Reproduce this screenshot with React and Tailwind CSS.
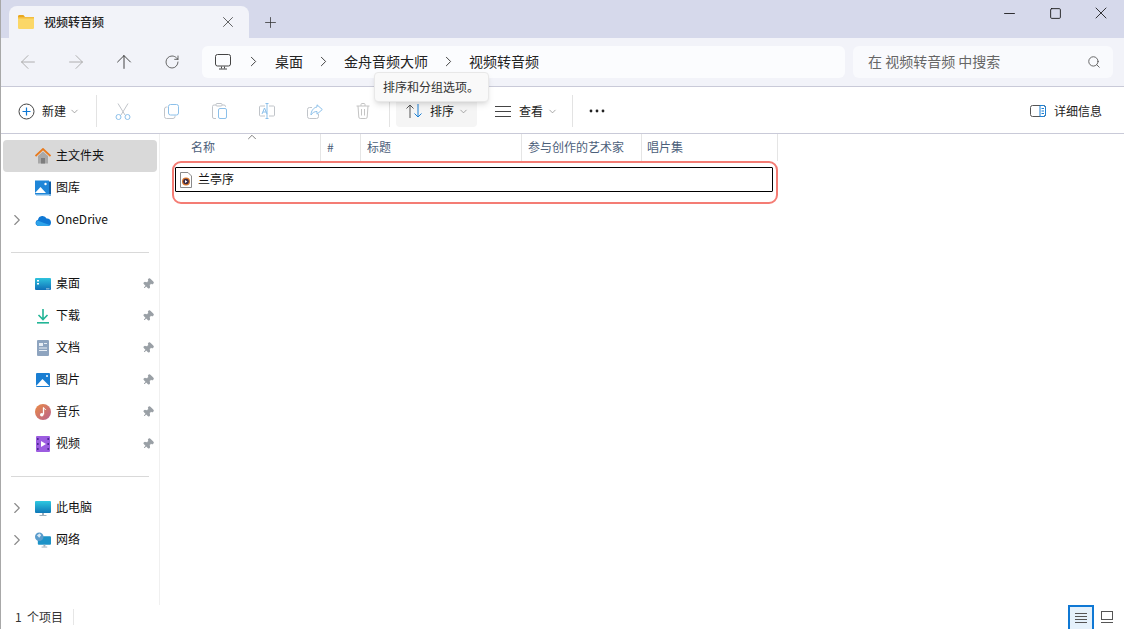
import { ArrowLeft, ArrowRight, ArrowUp, RotateCw, ChevronRight, ChevronDown, ChevronUp, X, Plus, Minus, Square, Search, Pin } from "lucide-react";

const font = { fontFamily: '"Noto Sans CJK SC", "Noto Sans", sans-serif' };

function FolderIcon() {
  return (
    <svg width="16" height="14" viewBox="0 0 16 14">
      <path d="M0 1.500C0 .7.6 0 1.400 0h4l1.600 2H0z" fill="#e9a820" />
      <rect x="0" y="2" width="16" height="12" rx="1.200" fill="#fbd768" />
      <rect x="0" y="2" width="16" height="1.500" fill="#f3bd3f" />
    </svg>
  );
}

function HomeIcon() {
  return (
    <svg width="16" height="16" viewBox="0 0 16 16">
      <path d="M3 8l5-4.500L13 8v7.500H3z" fill="#a8a8a8" />
      <rect x="6" y="10" width="4" height="5.500" fill="#7d7d7d" />
      <path d="M.5 8L8 1l7.500 7" fill="none" stroke="#e87a1d" strokeWidth="1.800" />
    </svg>
  );
}

function GalleryIcon() {
  return (
    <svg width="16" height="16" viewBox="0 0 16 16">
      <rect x="0" y="0.500" width="14" height="14" fill="#1f86d8" />
      <rect x="14" y="1.500" width="2" height="14" fill="#0f5fa8" />
      <rect x="1" y="14" width="15" height="1.500" fill="#6cb2e8" />
      <path d="M0 13l5.500-6L11 13z" fill="#fff" />
      <circle cx="10.500" cy="4" r="1.200" fill="#fff" />
    </svg>
  );
}

function CloudIcon() {
  return (
    <svg width="16" height="11" viewBox="0 0 16 11">
      <path d="M3.500 11A3.200 3.200 0 013 4.700 4.600 4.600 0 0111.600 3.600 3.800 3.800 0 0116 7.500 3.500 3.500 0 0112.500 11z" fill="#0f78d4" />
      <path d="M3.500 11A3 3 0 012.500 5.500L9 8l5.800 2A3.400 3.400 0 0112.500 11z" fill="#2fa4ea" />
    </svg>
  );
}

function DesktopIcon() {
  return (
    <svg width="16" height="12" viewBox="0 0 16 12">
      <defs>
        <linearGradient id="dk" x1="0" y1="0" x2="0" y2="1">
          <stop offset="0" stopColor="#2ec3dd" />
          <stop offset="1" stopColor="#0f6fb8" />
        </linearGradient>
      </defs>
      <rect width="16" height="12" rx="1" fill="url(#dk)" />
      <rect x="2" y="2" width="2" height="1.500" fill="#fff" />
      <rect x="2" y="5" width="2" height="1.500" fill="#fff" />
      <rect x="11" y="10.500" width="3.500" height="0.800" fill="#cde" />
    </svg>
  );
}

function DownloadIcon() {
  return (
    <svg width="12" height="15" viewBox="0 0 12 15">
      <path d="M6 0v10M1.500 6L6 10.500 10.500 6" fill="none" stroke="#22b596" strokeWidth="1.600" />
      <rect y="13" width="12" height="1.600" fill="#22b596" />
    </svg>
  );
}

function DocIcon() {
  return (
    <svg width="12" height="16" viewBox="0 0 12 16">
      <rect width="12" height="16" rx="1" fill="#8ea4bf" />
      <rect x="2" y="3" width="4" height="3" fill="#e8eef5" />
      <rect x="7" y="3" width="3" height="1" fill="#e8eef5" />
      <rect x="2" y="7.500" width="8" height="1" fill="#e8eef5" />
      <rect x="2" y="10" width="8" height="1" fill="#e8eef5" />
    </svg>
  );
}

function PictureIcon() {
  return (
    <svg width="14" height="14" viewBox="0 0 14 14">
      <rect width="14" height="14" rx="1" fill="#1a7ed2" />
      <path d="M0 13L6.500 6 13.500 13z" fill="#fff" />
      <circle cx="11" cy="3" r="1" fill="#fff" />
    </svg>
  );
}

function MusicIcon() {
  return (
    <svg width="16" height="16" viewBox="0 0 16 16">
      <defs>
        <linearGradient id="mu" x1="0" y1="0" x2="1" y2="1">
          <stop offset="0" stopColor="#ea8a44" />
          <stop offset="1" stopColor="#b9628f" />
        </linearGradient>
      </defs>
      <circle cx="8" cy="8" r="8" fill="url(#mu)" />
      <path d="M8.500 3.500v7" stroke="#fff" strokeWidth="1.300" />
      <path d="M8.500 3.500c.5 1.500 2 1.500 2.500 2.500" stroke="#fff" strokeWidth="1" fill="none" />
      <circle cx="6.800" cy="10.800" r="1.800" fill="#fff" />
    </svg>
  );
}

function VideoIcon() {
  return (
    <svg width="14" height="16" viewBox="0 0 14 16">
      <rect width="14" height="16" rx="1" fill="#9c5ce0" />
      <path d="M5 5l5 3-5 3z" fill="#fff" />
      <rect x="1" y="2" width="1.600" height="2" fill="#4c2a94" />
      <rect x="1" y="7" width="1.600" height="2" fill="#4c2a94" />
      <rect x="1" y="12" width="1.600" height="2" fill="#4c2a94" />
      <rect x="11.400" y="2" width="1.600" height="2" fill="#4c2a94" />
      <rect x="11.400" y="7" width="1.600" height="2" fill="#4c2a94" />
      <rect x="11.400" y="12" width="1.600" height="2" fill="#4c2a94" />
    </svg>
  );
}

function PcIcon() {
  return (
    <svg width="16" height="15" viewBox="0 0 16 15">
      <defs>
        <linearGradient id="pc" x1="0" y1="0" x2="0" y2="1">
          <stop offset="0" stopColor="#2ec8e0" />
          <stop offset="1" stopColor="#0f78b8" />
        </linearGradient>
      </defs>
      <rect width="16" height="12" rx="1" fill="url(#pc)" />
      <rect x="7" y="12" width="2" height="2" fill="#9fb0bd" />
      <rect x="4.500" y="14" width="7" height="1" fill="#9fb0bd" />
    </svg>
  );
}

function NetworkIcon() {
  return (
    <svg width="17" height="16" viewBox="0 0 17 16">
      <rect x="3" y="4" width="14" height="9" rx="1" fill="#1d93c8" />
      <rect x="9" y="13" width="2" height="2" fill="#9fb0bd" />
      <rect x="7" y="15" width="6" height="1" fill="#9fb0bd" />
      <circle cx="4.500" cy="4.500" r="4.500" fill="#5a9ccc" />
      <path d="M2 3l3-2 1.500 2-2 2.500z" fill="#d8e8f4" />
    </svg>
  );
}

function CutIcon() {
  return (
    <svg width="16" height="17" viewBox="0 0 16 17" fill="none">
      <path d="M3 .5l7 11.500M13 .5L6 12" stroke="#c0c4c9" />
      <circle cx="3.500" cy="14" r="2.500" stroke="#8cc0ea" />
      <circle cx="12.500" cy="14" r="2.500" stroke="#8cc0ea" />
    </svg>
  );
}

function CopyIcon() {
  return (
    <svg width="15" height="15" viewBox="0 0 15 15" fill="none">
      <path d="M3.500 3H2.500a2 2 0 00-2 2v7.500a2 2 0 002 2H9a2 2 0 002-2v-1" stroke="#c0c4c9" />
      <rect x="4.500" y=".5" width="10" height="10.500" rx="2" stroke="#8cc0ea" />
    </svg>
  );
}

function PasteIcon() {
  return (
    <svg width="15" height="16" viewBox="0 0 15 16" fill="none">
      <path d="M4 2H2a1.500 1.500 0 00-1.500 1.500V14A1.500 1.500 0 002 15.500h2M10 2h2a1.500 1.500 0 011.500 1.500V4" stroke="#c0c4c9" />
      <rect x="4" y=".5" width="6" height="2.500" rx="1" stroke="#c0c4c9" />
      <rect x="6.500" y="5.500" width="8" height="10" rx="1.500" stroke="#8cc0ea" />
    </svg>
  );
}

function RenameIcon() {
  return (
    <svg width="16" height="16" viewBox="0 0 16 16" fill="none" stroke="#c0c4c9" strokeWidth="1">
      <path d="M6 3H1.500A1 1 0 00.5 4v8a1 1 0 001 1H6M10 3h4.500a1 1 0 011 1v8a1 1 0 01-1 1H10" />
      <path d="M8 .5v15M6.500.5h3M6.500 15.500h3" stroke="#8cc0ea" />
      <path d="M3 11l2.500-6L8 11M3.800 9h3.500" stroke="#8cc0ea" />
    </svg>
  );
}

function ShareIcon() {
  return (
    <svg width="16" height="15" viewBox="0 0 16 15" fill="none">
      <path d="M11.500 10v2.500a2 2 0 01-2 2h-7a2 2 0 01-2-2v-7a2 2 0 012-2H5" stroke="#c0c4c9" />
      <path d="M10 .8l5.300 4.700-5.300 4.700V7.500C7.500 7.500 5.500 8.500 4 11c0-4 2.500-7.500 6-8z" stroke="#8cc0ea" />
    </svg>
  );
}

function TrashIcon() {
  return (
    <svg width="14" height="16" viewBox="0 0 14 16" fill="none" stroke="#c4c4c4">
      <path d="M.5 3h13M5 3V1.500a1 1 0 011-1h2a1 1 0 011 1V3M2 3l.8 11a1.500 1.500 0 001.500 1.500h5.400A1.500 1.500 0 0011.200 14L12 3M5.500 6v6.500M8.500 6v6.500" />
    </svg>
  );
}

function SortIcon() {
  return (
    <svg width="16" height="14" viewBox="0 0 16 14" fill="none" strokeWidth="1">
      <path d="M4 14V1M.5 4.500L4 1l3.500 3.500" stroke="#555" />
      <path d="M12 0v13M8.500 9.500L12 13l3.500-3.500" stroke="#1a7fd4" />
    </svg>
  );
}

function ViewIcon() {
  return (
    <svg width="16" height="11" viewBox="0 0 16 11" stroke="#444" strokeWidth="1">
      <path d="M0 .5h16M0 5.500h16M0 10.500h16" />
    </svg>
  );
}

function MoreIcon() {
  return (
    <svg width="16" height="4" viewBox="0 0 16 4" fill="#222">
      <circle cx="2" cy="2" r="1.400" />
      <circle cx="8" cy="2" r="1.400" />
      <circle cx="14" cy="2" r="1.400" />
    </svg>
  );
}

function DetailsIcon() {
  return (
    <svg width="16" height="12" viewBox="0 0 16 12" fill="none">
      <rect x=".5" y=".5" width="15" height="11" rx="2" stroke="#555" />
      <path d="M10 .5h3.500a2 2 0 012 2v7a2 2 0 01-2 2H10z" stroke="#1a7fd4" />
      <path d="M11.500 3.500h2.500M11.500 6h2.500M11.500 8.500h2.500" stroke="#1a7fd4" />
    </svg>
  );
}

function AudioFileIcon() {
  return (
    <svg width="12" height="16" viewBox="0 0 12 16">
      <path d="M.5.5h7.500l3.500 3.500v11.500H.5z" fill="#fff" stroke="#8a8a8a" />
      <circle cx="6" cy="9.500" r="4" fill="#d9762c" />
      <circle cx="6" cy="9.500" r="2.800" fill="#3a2a44" />
      <path d="M5 8l2.400 1.500L5 11z" fill="#fff" />
    </svg>
  );
}

function NavItem({ icon, label, pinned, chevron, active }) {
  return (
    <div className={`ml-[2px] mr-[2px] flex h-8 items-center rounded ${active ? "bg-[#d9d9d9]" : ""}`}>
      <div className="flex w-[32px] shrink-0 justify-center pr-[4px]">
        {chevron && <ChevronRight className="h-[18px] w-[18px] text-[#8a8a8a]" strokeWidth={1.5} />}
      </div>
      <div className="flex w-[16px] shrink-0 justify-center">{icon}</div>
      <span className="mb-[2px] ml-[5px] flex-1 text-[12px] text-[#111]">{label}</span>
      {pinned && <Pin className="mr-[3px] h-[12px] w-[12px] rotate-45 fill-[#9aa0a6] text-[#9aa0a6]" />}
    </div>
  );
}

function ToolIcon({ children }) {
  return <div className="flex w-[48px] shrink-0 justify-center">{children}</div>;
}

function HeaderCell({ width, pad, children }) {
  return (
    <div className={`flex h-full shrink-0 items-center border-r border-[#e5e5e5] pb-px text-[12px] text-[#4c607a] ${width} ${pad}`}>
      {children}
    </div>
  );
}

export default function App() {
  return (
    <div style={font} className="relative flex h-[629px] w-[1124px] flex-col overflow-hidden border-l border-[#a8a8a8] bg-white">
      {/* title bar */}
      <div className="flex h-[38px] shrink-0 items-end bg-[#d6d9eb]">
        <div className="ml-[8px] flex h-[32px] w-[240px] items-center rounded-t-lg bg-[#f2f3f9] pl-[9px] pr-[12px]">
          <FolderIcon />
          <span className="ml-[10px] flex-1 text-[12px] font-medium text-[#222]">视频转音频</span>
          <X className="h-[18px] w-[18px] text-[#333]" strokeWidth={1} />
        </div>
        <div className="ml-[13px] flex h-[32px] w-[17px] items-center">
          <Plus className="h-[17px] w-[17px] text-[#333]" strokeWidth={1.1} />
        </div>
        <div className="mb-[12px] ml-auto flex h-[26px]">
          <div className="flex w-[46px] items-center justify-center"><Minus className="h-[17px] w-[17px] text-[#111]" strokeWidth={1.2} /></div>
          <div className="flex w-[46px] items-center justify-center"><Square className="h-[13px] w-[13px] text-[#111]" strokeWidth={1.6} /></div>
          <div className="flex w-[46px] items-center justify-center"><X className="h-[20px] w-[20px] text-[#111]" strokeWidth={1} /></div>
        </div>
      </div>

      {/* address row */}
      <div className="flex h-[49px] shrink-0 items-center border-b border-[#c9cad8] bg-[#f2f3f9] pb-[1px]">
        <div className="flex w-[201px] shrink-0 pl-[3px]">
          <div className="flex w-[48px] justify-center"><ArrowLeft className="h-[22px] w-[22px] text-[#a9a9a9]" strokeWidth={1} /></div>
          <div className="flex w-[48px] justify-center"><ArrowRight className="h-[22px] w-[22px] text-[#a9a9a9]" strokeWidth={1} /></div>
          <div className="flex w-[48px] justify-center"><ArrowUp className="h-[22px] w-[22px] text-[#333]" strokeWidth={1} /></div>
          <div className="flex w-[48px] items-center justify-center"><RotateCw className="h-[16px] w-[16px] text-[#444]" strokeWidth={1.2} /></div>
        </div>
        <div className="flex h-[32px] w-[643px] shrink-0 items-center rounded-md bg-[#fbfcfe] pl-[13px] text-[14px] text-[#222]">
          <svg width="16" height="16" viewBox="0 0 16 16" fill="none" stroke="#444">
            <rect x=".5" y=".5" width="15" height="11.500" rx="2" />
            <path d="M6.500 12.500v2M9.500 12.500v2M4 15h8" />
          </svg>
          <ChevronRight className="ml-[14px] h-[17px] w-[17px] text-[#333]" strokeWidth={1.3} />
          <span className="ml-[13px]">桌面</span>
          <ChevronRight className="ml-[12px] h-[17px] w-[17px] text-[#333]" strokeWidth={1.3} />
          <span className="ml-[12px]">金舟音频大师</span>
          <ChevronRight className="ml-[12px] h-[17px] w-[17px] text-[#333]" strokeWidth={1.3} />
          <span className="ml-[12px]">视频转音频</span>
        </div>
        <div className="ml-[8px] flex h-[32px] w-[260px] shrink-0 items-center justify-between rounded-md bg-[#f9fafd] pl-[15px] pr-[12px] text-[14px] text-[#666]">
          <span>在 视频转音频 中搜索</span>
          <Search className="h-[14px] w-[14px] text-[#555]" strokeWidth={1.5} />
        </div>
      </div>

      {/* toolbar */}
      <div className="flex h-[47px] shrink-0 items-center border-b border-[#c9cad8] pt-[2px] text-[12px] text-[#222]">
        <div className="flex w-[95px] shrink-0 items-center pl-[17px]">
          <svg width="17" height="17" viewBox="0 0 17 17" fill="none">
            <circle cx="8.500" cy="8.500" r="7.500" stroke="#444" />
            <path d="M8.500 4.500v8M4.500 8.500h8" stroke="#0f78d4" strokeWidth="1.200" />
          </svg>
          <span className="ml-[7px]">新建</span>
          <ChevronDown className="ml-[3px] h-[11px] w-[11px] text-[#888]" strokeWidth={1.6} />
        </div>
        <div className="h-[32px] w-px shrink-0 bg-[#e3e3e3]" />
        <div className="flex shrink-0 items-center pl-[2px]">
          <ToolIcon><CutIcon /></ToolIcon>
          <ToolIcon><CopyIcon /></ToolIcon>
          <ToolIcon><PasteIcon /></ToolIcon>
          <ToolIcon><RenameIcon /></ToolIcon>
          <ToolIcon><ShareIcon /></ToolIcon>
          <ToolIcon><TrashIcon /></ToolIcon>
        </div>
        <div className="ml-[2px] h-[32px] w-px shrink-0 bg-[#e3e3e3]" />
        <div className="ml-[6px] flex h-[32px] w-[81px] shrink-0 items-center rounded bg-[#f5f5f5] pl-[10px]">
          <SortIcon />
          <span className="ml-[8px]">排序</span>
          <ChevronDown className="ml-[4px] h-[11px] w-[11px] text-[#888]" strokeWidth={1.6} />
        </div>
        <div className="ml-[18px] flex shrink-0 items-center">
          <ViewIcon />
          <span className="ml-[8px]">查看</span>
          <ChevronDown className="ml-[4px] h-[11px] w-[11px] text-[#888]" strokeWidth={1.6} />
        </div>
        <div className="ml-[14px] h-[32px] w-px shrink-0 bg-[#e3e3e3]" />
        <div className="ml-[16px]"><MoreIcon /></div>
        <div className="ml-auto flex items-center pr-[22px]">
          <DetailsIcon />
          <span className="ml-[8px]">详细信息</span>
        </div>
      </div>

      {/* body */}
      <div className="flex min-h-0 flex-1">
        <div className="flex w-[159px] shrink-0 flex-col border-r border-[#f0f0f0] pt-[6px]">
          <NavItem active icon={<HomeIcon />} label="主文件夹" />
          <NavItem icon={<GalleryIcon />} label="图库" />
          <NavItem chevron icon={<CloudIcon />} label="OneDrive" />
          <div className="ml-[10px] mr-[10px] mt-[16px] h-px bg-[#d9d9d9]" />
          <div className="mt-[15px]">
            <NavItem pinned icon={<DesktopIcon />} label="桌面" />
            <NavItem pinned icon={<DownloadIcon />} label="下载" />
            <NavItem pinned icon={<DocIcon />} label="文档" />
            <NavItem pinned icon={<PictureIcon />} label="图片" />
            <NavItem pinned icon={<MusicIcon />} label="音乐" />
            <NavItem pinned icon={<VideoIcon />} label="视频" />
          </div>
          <div className="ml-[10px] mr-[10px] mt-[16px] h-px bg-[#d9d9d9]" />
          <div className="mt-[15px]">
            <NavItem chevron icon={<PcIcon />} label="此电脑" />
            <NavItem chevron icon={<NetworkIcon />} label="网络" />
          </div>
        </div>

        <div className="flex min-w-0 flex-1 flex-col">
          <div className="relative flex h-[27px] shrink-0">
            <HeaderCell width="w-[161px]" pad="pl-[31px]">名称</HeaderCell>
            <HeaderCell width="w-[40px]" pad="pl-[6px]">#</HeaderCell>
            <HeaderCell width="w-[161px]" pad="pl-[6px]">标题</HeaderCell>
            <HeaderCell width="w-[120px]" pad="pl-[6px]">参与创作的艺术家</HeaderCell>
            <HeaderCell width="w-[136px]" pad="pl-[5px]">唱片集</HeaderCell>
            <ChevronUp className="absolute left-[85px] top-[-4px] h-[14px] w-[14px] text-[#666]" strokeWidth={1.4} />
          </div>
          <div className="ml-[12px] flex h-[43px] w-[606px] shrink-0 rounded-[9px] border-2 border-[#f47c74] pl-px pr-[3px] pt-[4px]">
            <div className="flex h-[25px] w-full items-center rounded-[1px] border border-black pl-[4px] text-[12px] text-[#111]">
              <AudioFileIcon />
              <span className="mb-[2px] ml-[6px]">兰亭序</span>
            </div>
          </div>
        </div>
      </div>

      {/* status bar */}
      <div className="flex h-[24px] shrink-0 items-center text-[12px] text-[#333]">
        <span className="ml-[14px] whitespace-pre">1  个项目</span>
        <div className="ml-[10px] h-[16px] w-px bg-[#e6e6e6]" />
        <div className="ml-auto flex h-full items-end pr-[4px]">
          <div className="flex h-[24px] w-[26px] items-center justify-center border-2 border-b-0 border-[#0f78d4] bg-[#e5f1fb]">
            <svg width="12" height="10" viewBox="0 0 12 10" stroke="#555"><path d="M0 .5h12M0 3.500h12M0 6.500h12M0 9.500h12" /></svg>
          </div>
          <div className="flex h-[24px] w-[26px] items-center justify-center">
            <svg width="12" height="12" viewBox="0 0 12 12" fill="none" stroke="#555"><rect x=".5" y=".5" width="11" height="8" /><path d="M0 11.500h12" /></svg>
          </div>
        </div>
      </div>

      {/* tooltip */}
      <div className="absolute left-[373px] top-[72px] flex h-[30px] w-[115px] items-center rounded border border-[#e8e8e8] bg-[#f9f9f9] pl-[8px] text-[12px] text-[#333] shadow-md">
        排序和分组选项。
      </div>
    </div>
  );
}
